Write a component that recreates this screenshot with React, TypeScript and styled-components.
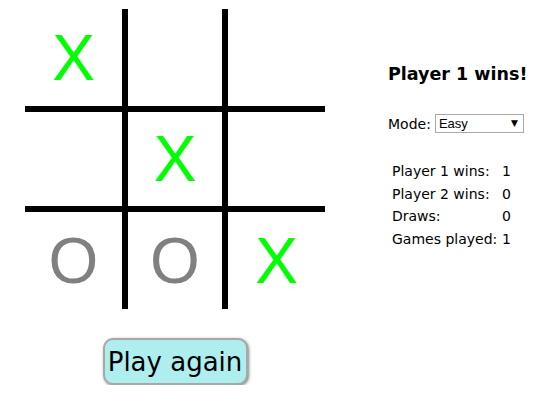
import React from "react";
import styled, { createGlobalStyle } from "styled-components";

const Global = createGlobalStyle`
  html, body { margin: 0; padding: 0; background: #fff; }
  body { font-family: "DejaVu Sans", "Liberation Sans", sans-serif; color: #000; }
`;

const Page = styled.div`
  display: flex;
  align-items: flex-start;
  padding: 9px 0 0 25px;
`;

const LeftCol = styled.div`
  display: flex;
  flex-direction: column;
  align-items: center;
  width: 300px;
`;

const Board = styled.div`
  display: grid;
  grid-template-columns: 97px 94px 97px;
  grid-template-rows: 97px 94px 97px;
  gap: 6px;
  background: #000;
`;

const Cell = styled.div<{ $mark: string }>`
  background: #fff;
  display: flex;
  align-items: center;
  justify-content: center;
  font-family: "Liberation Sans", Arial, sans-serif;
  font-size: 64px;
  line-height: 1;
  color: ${(p) => (p.$mark === "X" ? "#00ff00" : "#808080")};
`;

const PlayButton = styled.button`
  margin-top: 29px;
  width: 145px;
  height: 47px;
  background: #afeeee;
  border: 2px solid #a8a8a8;
  border-radius: 10px;
  box-shadow: 1px 1px 3px rgba(0, 0, 0, 0.5);
  font-family: "DejaVu Sans", sans-serif;
  font-size: 26px;
  color: #000;
  padding: 0;
  cursor: pointer;
`;

const Side = styled.div`
  margin-left: 63px;
  padding-top: 55px;
  display: flex;
  flex-direction: column;
`;

const Heading = styled.h2`
  margin: 0;
  font-size: 17.5px;
  font-weight: bold;
  line-height: 20px;
`;

const ModeRow = styled.label`
  display: flex;
  align-items: center;
  gap: 4px;
  margin-top: 30px;
  font-size: 14px;
`;

const SelectWrap = styled.span`
  position: relative;
  display: inline-flex;
`;

const Select = styled.select`
  appearance: none;
  -webkit-appearance: none;
  width: 89px;
  height: 19px;
  font-family: "Liberation Sans", Arial, sans-serif;
  font-size: 13px;
  color: #000;
  border: 1px solid #a9a9a9;
  border-radius: 0;
  background: #fff;
  padding: 0 3px;
  outline: none;
`;

const Arrow = styled.span`
  position: absolute;
  right: 6px;
  top: 3px;
  font-family: "DejaVu Sans", sans-serif;
  font-size: 9px;
  line-height: 12px;
  color: #000;
  pointer-events: none;
`;

const Stats = styled.table`
  margin-top: 27px;
  margin-left: 2px;
  border-collapse: collapse;
  font-size: 14px;
`;

const StatRow = styled.tr`
  height: 22.5px;
`;

const Label = styled.td`
  padding: 0 2px;
  width: 106px;
`;

const Value = styled.td`
  padding: 0 2px;
`;

const board = ["X", "", "", "", "X", "", "O", "O", "X"];

const stats: [string, number][] = [
  ["Player 1 wins:", 1],
  ["Player 2 wins:", 0],
  ["Draws:", 0],
  ["Games played:", 1],
];

export default function App() {
  return (
    <>
      <Global />
      <Page>
        <LeftCol>
          <Board>
            {board.map((m, i) => (
              <Cell key={i} $mark={m}>
                {m}
              </Cell>
            ))}
          </Board>
          <PlayButton>Play again</PlayButton>
        </LeftCol>
        <Side>
          <Heading>Player 1 wins!</Heading>
          <ModeRow>
            Mode:
            <SelectWrap>
              <Select defaultValue="Easy">
                <option>Easy</option>
                <option>Hard</option>
              </Select>
              <Arrow>▼</Arrow>
            </SelectWrap>
          </ModeRow>
          <Stats>
            <tbody>
              {stats.map(([l, v]) => (
                <StatRow key={l}>
                  <Label>{l}</Label>
                  <Value>{v}</Value>
                </StatRow>
              ))}
            </tbody>
          </Stats>
        </Side>
      </Page>
    </>
  );
}
